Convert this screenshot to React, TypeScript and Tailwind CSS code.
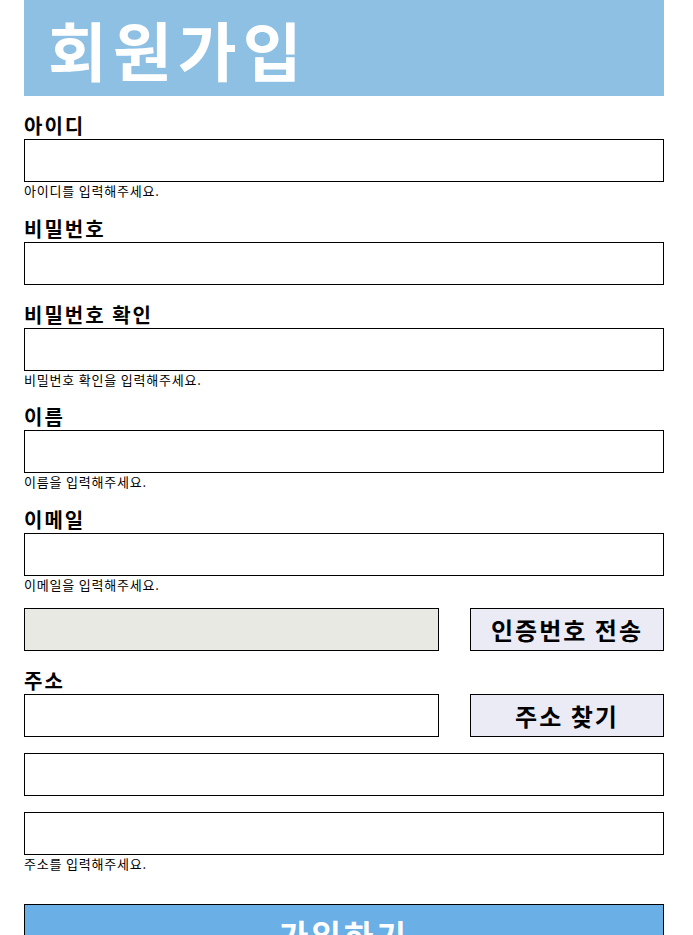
import React from 'react';

const font = { fontFamily: '"Noto Sans CJK KR", "Noto Sans", sans-serif' };

interface FieldProps {
  label?: string;
  help?: string;
}

const Field: React.FC<FieldProps> = ({ label, help }) => (
  <div className="mt-4">
    {label && (
      <div className="h-[27px] text-[20px] leading-[27px] font-bold tracking-[2px] text-black">{label}</div>
    )}
    <input className="block h-[43px] w-full border border-black bg-white outline-none" />
    {help && <div className="h-[16.5px] text-[13px] leading-[17px] tracking-[0.8px] text-black">{help}</div>}
  </div>
);

export default function App() {
  return (
    <div className="ml-6 w-[640px] bg-white" style={font}>
      {/* 헤더 */}
      <div className="flex h-24 items-center bg-[#8ec0e4] pl-6">
        <h1 className="text-[64px] leading-none font-bold tracking-[6px] text-white">회원가입</h1>
      </div>

      <Field label="아이디" help="아이디를 입력해주세요." />
      <Field label="비밀번호" />
      <Field label="비밀번호 확인" help="비밀번호 확인을 입력해주세요." />
      <Field label="이름" help="이름을 입력해주세요." />
      <Field label="이메일" help="이메일을 입력해주세요." />

      {/* 인증번호 */}
      <div className="mt-4 flex justify-between">
        <input className="block h-[43px] w-[415px] border border-black bg-[#e9e9e3] outline-none" />
        <button className="h-[43px] w-[194px] border border-black bg-[#ebebf5] text-[24px] font-bold tracking-[2px] text-black">
          인증번호 전송
        </button>
      </div>

      {/* 주소 */}
      <div className="mt-4">
        <div className="h-[27px] text-[20px] leading-[27px] font-bold tracking-[2px] text-black">주소</div>
        <div className="flex justify-between">
          <input className="block h-[43px] w-[415px] border border-black bg-white outline-none" />
          <button className="h-[43px] w-[194px] border border-black bg-[#ebebf5] text-[24px] font-bold tracking-[2px] text-black">
            주소 찾기
          </button>
        </div>
      </div>
      <Field />
      <Field help="주소를 입력해주세요." />

      <button className="mt-8 h-[60px] w-full border border-black bg-[#6aafe5] text-[32px] font-bold tracking-[3px] text-white">
        가입하기
      </button>
    </div>
  );
}
